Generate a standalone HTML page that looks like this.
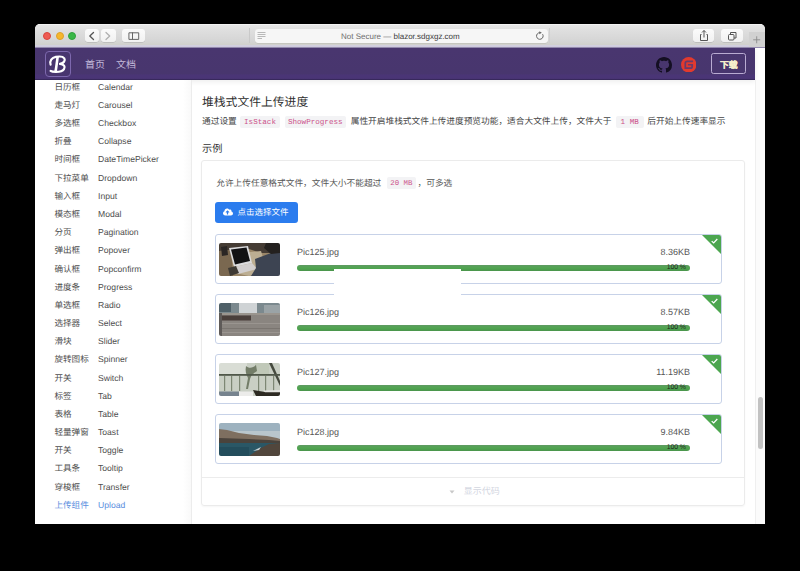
<!DOCTYPE html>
<html lang="zh-CN"><head><meta charset="utf-8">
<style>
*{margin:0;padding:0;box-sizing:border-box}
html,body{width:800px;height:571px;background:#000;overflow:hidden;font-family:"Liberation Sans",sans-serif;text-rendering:geometricPrecision}
body{position:relative}
.abs{position:absolute;white-space:nowrap}
#win{position:absolute;left:35px;top:24px;width:730px;height:500px;background:#fff;border-radius:5px 5px 3px 3px;overflow:hidden}
#tb{position:absolute;left:35px;top:24px;width:730px;height:24px;background:linear-gradient(#fbfbfb 0px,#e6e6e6 1.2px,#dedede 7px,#d5d5d5 17px,#d1d1cd 20.5px,#d2cfdf 21.5px,#cfcbdf 23px,#5a4a80 24px);border-radius:5px 5px 0 0}
.dot{position:absolute;top:31.5px;width:8.5px;height:8.5px;border-radius:50%}
.btn{position:absolute;top:29px;height:13px;background:linear-gradient(#fbfbfb,#f1f1f1);border-radius:3px;box-shadow:0 0.5px 0.5px #aaa}
#nav{position:absolute;left:35px;top:48px;width:720px;height:31.6px;background:linear-gradient(#49366f 0%,#48366e 80%,#4a3576 85%,#4a3576 95%,#2f2350 100%);box-shadow:0 2px 5px rgba(0,0,0,.07)}
#side{position:absolute;left:35px;top:80px;width:157px;height:444px;border-right:1.3px solid #ececec;background:linear-gradient(90deg,#fff 148px,#f9f9f9 156px)}
.si{position:absolute;left:0;height:18px;line-height:18px;font-size:9px;color:#4e4e4e;white-space:nowrap}
.si .zh{position:absolute;left:54.4px;font-size:8.6px}
.si .en{position:absolute;left:98px;font-size:8.6px}
.si.act{color:#5a8ede}
.d1 span{top:115.3px;font-size:8.7px;color:#444;line-height:12px}
.d1 span.code{top:115.6px;height:12.5px;line-height:14.2px;font-size:7.6px;color:#cc5289;text-align:center}
.d2 span{top:176.7px;font-size:8.7px;color:#555;line-height:12px}
.d2 span.code{top:177px;height:12px;line-height:14.6px;font-size:7.4px;color:#cc5289;text-align:center}
.code{display:inline-block;background:#f3f3f5;color:#d6407f;font-family:"Liberation Mono",monospace;font-size:7.6px;border-radius:2px}
#card{position:absolute;left:201px;top:160px;width:544px;height:346px;border:1.2px solid #ebebeb;border-radius:3px;box-shadow:0 1px 2px rgba(0,0,0,.04)}
#cardsep{position:absolute;left:202px;top:476.6px;width:542px;height:1px;background:#ececec}
.item{position:absolute;left:215px;width:507px;height:50px;border:1px solid #c7d2e8;border-radius:3px;background:#fff;overflow:hidden}
.thumb{position:absolute;left:3px;top:7.5px;width:61px;height:33.3px;border-radius:2px;overflow:hidden}
.thumb svg{display:block;filter:blur(0.5px)}
.fn{position:absolute;left:81px;top:11.8px;font-size:9px;color:#555}
.fs{position:absolute;right:31px;top:11.8px;font-size:9px;color:#555}
.bar{position:absolute;left:81px;top:29.6px;width:393px;height:6.2px;border-radius:3px;background:linear-gradient(#5f9a62,#50a650 50%,#4a944c)}
.bar span{position:absolute;right:4.2px;top:0.2px;font-size:6.9px;line-height:6px;color:#1d2a1d;letter-spacing:-0.1px}
.tri{position:absolute;right:0;top:0;width:0;height:0;border-top:19px solid #4ca64f;border-left:19px solid transparent}
.chk{position:absolute;right:3px;top:3px;width:7px;height:6px}
.t1{background:linear-gradient(90deg,#5a4838 0%,#8a7560 30%,#3b3f48 60%,#2a2c33 100%)}
.t2{background:linear-gradient(#6d7478 0%,#8c9296 40%,#777 60%,#8a8a88 100%)}
.t3{background:linear-gradient(90deg,#b8bdb2,#d2d6cc 40%,#9aa096 70%,#c5c9c0)}
.t4{background:linear-gradient(#9fb4c2 0%,#b5c5cf 30%,#4d4a44 45%,#2f5f78 70%,#3a3530 100%)}
</style></head><body>
<div id="win"></div>
<div id="tb"></div>
<div class="dot" style="left:42.5px;background:#ee5b53;border:0.7px solid #d9443d"></div>
<div class="dot" style="left:55.6px;background:#f6b72c;border:0.7px solid #dea02a"></div>
<div class="dot" style="left:67.6px;background:#3ab747;border:0.7px solid #2fa23b"></div>
<div class="btn" style="left:84.5px;width:14.5px"></div>
<div class="btn" style="left:100.5px;width:15px"></div>
<div class="btn" style="left:122px;width:23px"></div>
<svg class="abs" style="left:84px;top:29px" width="64" height="14" viewBox="0 0 64 14"><g fill="none" stroke-width="1.3" stroke-linecap="round" stroke-linejoin="round">
<path d="M9.5 3.5 L5.8 7 L9.5 10.5" stroke="#555"/>
<path d="M22 3.5 L25.7 7 L22 10.5" stroke="#b0b0b0"/>
<rect x="45.3" y="3.8" width="9.4" height="6.6" stroke="#666" stroke-width="1"/>
<path d="M48.5 3.8 V10.4" stroke="#666" stroke-width="1"/>
</g></svg>
<div class="abs" style="left:249px;top:28px;width:1px;height:15px;background:#c9c9c9"></div>
<div class="btn" style="left:254.5px;width:293px;top:29px;height:14px;background:#f6f6f6;box-shadow:0 0.6px 0.4px #b9b9b2"></div>
<svg class="abs" style="left:256px;top:31px" width="12" height="10" viewBox="0 0 12 10"><g stroke="#a8a8a8" stroke-width="0.8"><path d="M1.5 1.5H9.5M1.5 3.5H9.5M1.5 5.5H9.5M1.5 7.5H6"/></g></svg>
<div class="abs" style="left:341px;top:31.8px;font-size:8px;color:#3a3a3a"><span style="color:#6e6e6e">Not Secure —</span> blazor.sdgxgz.com</div>
<svg class="abs" style="left:535px;top:31px" width="10" height="10" viewBox="0 0 10 10"><path d="M7.6 3.2 A3.3 3.3 0 1 1 5 1.7" fill="none" stroke="#666" stroke-width="1"/><path d="M4.3 0.2 L6.8 1.8 L4.3 3.3z" fill="#666"/></svg>
<div class="abs" style="left:549px;top:28px;width:1px;height:15px;background:#d0d0d0"></div>
<div class="btn" style="left:693px;width:21px"></div>
<div class="btn" style="left:721px;width:22px"></div>
<svg class="abs" style="left:693px;top:29px" width="50" height="13" viewBox="0 0 50 13"><g fill="none" stroke="#555" stroke-width="1">
<path d="M8.5 5.5 H7.5 V11.5 H14.5 V5.5 H13.5"/><path d="M11 1.5 V8.5 M9 3.5 L11 1.5 L13 3.5"/>
<rect x="35.5" y="5.5" width="5.5" height="5.5" rx="1"/><path d="M37.5 5.5 V3.5 H43 V9 H41"/>
</g></svg>
<div class="abs" style="left:749px;top:32px;width:16px;height:14.5px;background:#d1d1d1"></div>
<svg class="abs" style="left:749px;top:32px" width="15" height="16" viewBox="0 0 15 16"><path d="M7.7 4.3 V11.3 M4.2 7.8 H11.2" stroke="#8c8c8c" stroke-width="0.9"/></svg>

<div id="nav"></div>
<div class="abs" style="left:45px;top:51px;width:26px;height:26px;border:1.5px solid #7d68ae;border-radius:4px;background:#48356f"></div>
<svg class="abs" style="left:43px;top:49px" width="30" height="30" viewBox="0 0 30 30"><g fill="none" stroke="#fff" stroke-linecap="round">
<path d="M7.6 15.6 C6.3 12.2 8.8 8.6 12.8 7.9 C16 7.3 19.8 7.2 21.3 9.3 C22.7 11.6 20.6 14.3 17.2 14.8" stroke-width="2.2"/>
<path d="M17 14.8 C21 15 22.6 17.6 21 20.1 C19.5 22.4 16 22.9 13 22.9 C10.5 22.9 8.5 22.6 7.6 21.9" stroke-width="2.2"/>
<path d="M14.6 8.2 C14.1 12.3 13.5 17.2 12.6 22.2" stroke-width="2.6"/>
</g></svg>
<div class="abs" style="left:85px;top:56px;font-size:10px;color:#c4bbdb">首页</div>
<div class="abs" style="left:116px;top:56px;font-size:10px;color:#c4bbdb">文档</div>
<svg class="abs" style="left:656px;top:56.5px" width="16" height="16" viewBox="0 0 16 16"><path fill="#140f22" d="M8 0C3.58 0 0 3.58 0 8c0 3.54 2.29 6.530 5.47 7.59.4.07.55-.17.55-.38 0-.19-.01-.82-.01-1.49-2.01.37-2.53-.49-2.69-.94-.09-.23-.48-.94-.82-1.13-.28-.15-.68-.52-.01-.53.63-.01 1.08.58 1.23.82.72 1.21 1.87.87 2.33.66.07-.52.28-.87.51-1.070-1.780-.2-3.64-.89-3.64-3.95 0-.87.31-1.59.82-2.15-.08-.2-.36-1.02.08-2.12 0 0 .67-.21 2.2.82.64-.18 1.32-.27 2-.27.68 0 1.36.09 2 .27 1.53-1.04 2.2-.82 2.2-.82.44 1.1.16 1.92.08 2.12.51.56.82 1.27.82 2.15 0 3.07-1.87 3.75-3.65 3.95.29.25.54.73.54 1.48 0 1.07-.01 1.93-.01 2.2 0 .21.15.46.55.38A8.013 8.013 0 0016 8c0-4.42-3.580-8-8-8z"/></svg>
<svg class="abs" style="left:680.5px;top:56.5px" width="15.5" height="15.5" viewBox="0 0 24 24"><circle cx="12" cy="12" r="12" fill="#e23a2e"/><path fill="#6a3a6a" d="M18.07 5.33c.33 0 .59.27.59.59v1.48c0 .33-.27.59-.59.59H9.78c-.98 0-1.78.8-1.78 1.78v5.63c0 .33.27.59.59.59h5.63c.98 0 1.78-.8 1.78-1.78v-.3c0-.33-.27-.59-.59-.59h-4.15c-.33 0-.59-.27-.59-.59v-1.48c0-.33.27-.59.59-.59h6.82c.33 0 .59.27.59.59v3.41a4 4 0 0 1-4 4H5.93c-.33 0-.59-.27-.59-.59V9.78a4.44 4.44 0 0 1 4.44-4.44z"/></svg>
<div class="abs" style="left:711.3px;top:53.2px;width:34.3px;height:21.3px;border:1.1px solid #b9abd2;border-radius:2.5px"></div>
<div class="abs" style="left:720px;top:57.8px;font-size:8.8px;font-weight:bold;color:#f6efcc;-webkit-text-stroke:0.25px #f6efcc">下载</div>

<div id="side"></div>
<div class="si" style="top:77.80px"><span class="zh">日历框</span><span class="en">Calendar</span></div>
<div class="si" style="top:95.97px"><span class="zh">走马灯</span><span class="en">Carousel</span></div>
<div class="si" style="top:114.14px"><span class="zh">多选框</span><span class="en">Checkbox</span></div>
<div class="si" style="top:132.31px"><span class="zh">折叠</span><span class="en">Collapse</span></div>
<div class="si" style="top:150.48px"><span class="zh">时间框</span><span class="en">DateTimePicker</span></div>
<div class="si" style="top:168.65px"><span class="zh">下拉菜单</span><span class="en">Dropdown</span></div>
<div class="si" style="top:186.82px"><span class="zh">输入框</span><span class="en">Input</span></div>
<div class="si" style="top:204.99px"><span class="zh">模态框</span><span class="en">Modal</span></div>
<div class="si" style="top:223.16px"><span class="zh">分页</span><span class="en">Pagination</span></div>
<div class="si" style="top:241.33px"><span class="zh">弹出框</span><span class="en">Popover</span></div>
<div class="si" style="top:259.50px"><span class="zh">确认框</span><span class="en">Popconfirm</span></div>
<div class="si" style="top:277.67px"><span class="zh">进度条</span><span class="en">Progress</span></div>
<div class="si" style="top:295.84px"><span class="zh">单选框</span><span class="en">Radio</span></div>
<div class="si" style="top:314.01px"><span class="zh">选择器</span><span class="en">Select</span></div>
<div class="si" style="top:332.18px"><span class="zh">滑块</span><span class="en">Slider</span></div>
<div class="si" style="top:350.35px"><span class="zh">旋转图标</span><span class="en">Spinner</span></div>
<div class="si" style="top:368.52px"><span class="zh">开关</span><span class="en">Switch</span></div>
<div class="si" style="top:386.69px"><span class="zh">标签</span><span class="en">Tab</span></div>
<div class="si" style="top:404.86px"><span class="zh">表格</span><span class="en">Table</span></div>
<div class="si" style="top:423.03px"><span class="zh">轻量弹窗</span><span class="en">Toast</span></div>
<div class="si" style="top:441.20px"><span class="zh">开关</span><span class="en">Toggle</span></div>
<div class="si" style="top:459.37px"><span class="zh">工具条</span><span class="en">Tooltip</span></div>
<div class="si" style="top:477.54px"><span class="zh">穿梭框</span><span class="en">Transfer</span></div>
<div class="si act" style="top:495.71px"><span class="zh">上传组件</span><span class="en">Upload</span></div>

<div class="abs" style="left:202px;top:93px;font-size:11.8px;color:#2e2e2e;font-weight:500">堆栈式文件上传进度</div>
<div class="d1">
<span class="abs" style="left:202px">通过设置</span>
<span class="abs code" style="left:240px;width:40px">IsStack</span>
<span class="abs code" style="left:284.5px;width:61.5px">ShowProgress</span>
<span class="abs" style="left:350.7px">属性开启堆栈式文件上传进度预览功能，适合大文件上传，文件大于</span>
<span class="abs code" style="left:615.7px;width:28px">1 MB</span>
<span class="abs" style="left:647.3px">后开始上传速率显示</span>
</div>
<div class="abs" style="left:202px;top:140.2px;font-size:10.2px;color:#333;font-weight:500">示例</div>

<div id="card"></div>
<div class="d2">
<span class="abs" style="left:216.2px">允许上传任意格式文件，文件大小不能超过</span>
<span class="abs code" style="left:386.6px;width:29.5px">20 MB</span>
<span class="abs" style="left:417.5px">，可多选</span>
</div>
<div class="abs" style="left:215.2px;top:201.5px;width:83.2px;height:21.3px;background:#2b7cee;border-radius:3px"></div>
<svg class="abs" style="left:223.2px;top:208.2px" width="10" height="8" viewBox="0 0 640 512"><path fill="#fff" d="M537.6 226.6c4.1-10.7 6.4-22.4 6.4-34.6 0-53-43-96-96-96-19.7 0-38.1 6-53.3 16.2C367 64.2 315.3 32 256 32c-88.4 0-160 71.6-160 160 0 2.7.1 5.4.2 8.1C40.2 219.8 0 273.2 0 336c0 79.5 64.5 144 144 144h368c70.7 0 128-57.3 128-128 0-61.9-44-113.6-102.4-125.4zM393.4 288H328v112c0 8.8-7.2 16-16 16h-48c-8.8 0-16-7.2-16-16V288h-65.4c-14.3 0-21.4-17.2-11.3-27.3l105.4-105.4c6.2-6.2 16.4-6.2 22.6 0l105.4 105.4c10.1 10.1 2.9 27.3-11.3 27.3z"/></svg>
<div class="abs" style="left:237.6px;top:205.5px;font-size:8.5px;color:#fff">点击选择文件</div>

<div class="item" style="top:234px"><div class="thumb"><svg width="61" height="33" viewBox="0 0 61 33"><g>
<rect width="61" height="33" fill="#9a8668"/>
<path d="M0 0H61V10H42L30 6 0 8z" fill="#453c34"/>
<path d="M22 10 L42 8 L48 28 L30 33 L16 30z" fill="#bcae92"/>
<path d="M0 8 L12 7 L14 33 H0z" fill="#7a6850"/>
<path d="M2 4 L8 3 L9 12 L3 13z" fill="#2a2624"/>
<path d="M10 5 L29 3 L33 20 L15 24z" fill="#dcdcde"/>
<path d="M12 6.5 L27.5 4.5 L31 18 L16 21.5z" fill="#121214"/>
<path d="M15 24 L33 20 L38 26 L19 31z" fill="#d2cfcf"/>
<path d="M9 25 L17 23 L20 30 L11 33z" fill="#3e3a34"/>
<path d="M36 16 L52 10 L61 9 V33 H32 L37 25z" fill="#3d4452"/>
<path d="M47 0 H61 V10 L52 11 L45 5z" fill="#24211f"/>
</g></svg></div><div class="fn">Pic125.jpg</div><div class="fs">8.36KB</div><div class="bar"><span>100 %</span></div><div class="tri"></div><svg class="chk" viewBox="0 0 10 8"><path d="M1 4.2 L3.8 6.8 L9 1.2" stroke="#fff" stroke-width="1.8" fill="none"/></svg></div>
<div class="item" style="top:294px"><div class="thumb"><svg width="61" height="33" viewBox="0 0 61 33"><g>
<rect width="61" height="33" fill="#8a8580"/>
<rect width="61" height="10" fill="#7b898e"/>
<rect x="0" y="0" width="12" height="9" fill="#4f6068"/>
<rect x="20" y="0" width="18" height="10" fill="#cfd3d5"/>
<rect x="45" y="2" width="16" height="8" fill="#9aa3a6"/>
<rect x="0" y="10" width="61" height="2" fill="#9a958e"/>
<rect x="2" y="12.5" width="30" height="5" fill="#4a3f3b"/>
<rect x="0" y="10" width="3" height="23" fill="#5e5a58"/>
<rect x="3" y="20" width="58" height="1" fill="#9a9590"/>
<rect x="3" y="25" width="58" height="1" fill="#7a7570"/>
<rect x="3" y="29" width="58" height="1" fill="#9a9590"/>
</g></svg></div><div class="fn">Pic126.jpg</div><div class="fs">8.57KB</div><div class="bar"><span>100 %</span></div><div class="tri"></div><svg class="chk" viewBox="0 0 10 8"><path d="M1 4.2 L3.8 6.8 L9 1.2" stroke="#fff" stroke-width="1.8" fill="none"/></svg></div>
<div class="item" style="top:354px"><div class="thumb"><svg width="61" height="33" viewBox="0 0 61 33"><g>
<rect width="61" height="33" fill="#c9cfc4"/>
<rect x="0" y="0" width="28" height="11" fill="#d9ddd5"/>
<rect x="36" y="0" width="14" height="11" fill="#c0c8b8"/>
<path d="M27 3 C30 6 34 5 37 2 L38 8 C35 10 32 12 31 16 L29 26 L27 26 L29 15 C27 11 26 8 27 3z" fill="#737d68"/>
<path d="M50 0 L53 0 L61 18 L61 23z" fill="#454a3e"/>
<rect x="0" y="11" width="61" height="1.8" fill="#50584a"/>
<g fill="#7d8774"><rect x="5" y="13" width="1.2" height="15"/><rect x="12" y="13" width="1.2" height="15"/><rect x="20" y="13" width="1.2" height="15"/><rect x="39" y="13" width="1.2" height="15"/><rect x="46" y="13" width="1.2" height="15"/><rect x="54" y="13" width="1.2" height="15"/></g>
<rect x="0" y="28.5" width="20" height="4.5" fill="#76838e"/>
<rect x="20" y="28.5" width="14" height="4.5" fill="#ececea"/>
<path d="M34 27 L46 29 L61 29 V33 H37z" fill="#2d2a22"/>
<path d="M44 27.5 L61 27 V29.2 L46 29.2z" fill="#e4e4e0"/>
</g></svg></div><div class="fn">Pic127.jpg</div><div class="fs">11.19KB</div><div class="bar"><span>100 %</span></div><div class="tri"></div><svg class="chk" viewBox="0 0 10 8"><path d="M1 4.2 L3.8 6.8 L9 1.2" stroke="#fff" stroke-width="1.8" fill="none"/></svg></div>
<div class="item" style="top:414px"><div class="thumb"><svg width="61" height="33" viewBox="0 0 61 33" preserveAspectRatio="none"><g>
<rect width="61" height="33" fill="#2c5d6c"/>
<rect width="61" height="17" fill="#b9c6cc"/>
<rect width="61" height="8" fill="#9db2bf"/>
<path d="M0 6 L8 7 L20 10 L35 12 L48 13 L58 15 L61 16 V19 H0z" fill="#7e6f60"/>
<path d="M0 15 L30 16 L50 17 L61 18 V20 H0z" fill="#4a433c"/>
<path d="M0 20 H61 V33 H0z" fill="#2a5766"/>
<path d="M0 24 H30 V33 H0z" fill="#234d5c"/>
<path d="M30 33 L40 26 L50 21 L61 20 V33z" fill="#51463c"/>
<path d="M34 28 L42 24 L40 27z" fill="#c8d2d6"/>
</g></svg></div><div class="fn">Pic128.jpg</div><div class="fs">9.84KB</div><div class="bar"><span>100 %</span></div><div class="tri"></div><svg class="chk" viewBox="0 0 10 8"><path d="M1 4.2 L3.8 6.8 L9 1.2" stroke="#fff" stroke-width="1.8" fill="none"/></svg></div>

<div class="abs" style="left:334px;top:269px;width:127px;height:27px;background:#fff"></div>
<div id="cardsep"></div>
<svg class="abs" style="left:448.5px;top:489.5px" width="6" height="4" viewBox="0 0 6 4"><path d="M0.5 0.5 H5.5 L3 3.5z" fill="#c8c8c8"/></svg>
<div class="abs" style="left:463.8px;top:485.2px;font-size:9px;line-height:12px;color:#d3d6df">显示代码</div>
<div class="abs" style="left:755px;top:79.5px;width:10px;height:444.5px;background:#fbfbfb;border-left:1px solid #efefef"></div>
<div class="abs" style="left:758px;top:397px;width:5px;height:52px;border-radius:3px;background:#c2c2c2"></div>
</body></html>
